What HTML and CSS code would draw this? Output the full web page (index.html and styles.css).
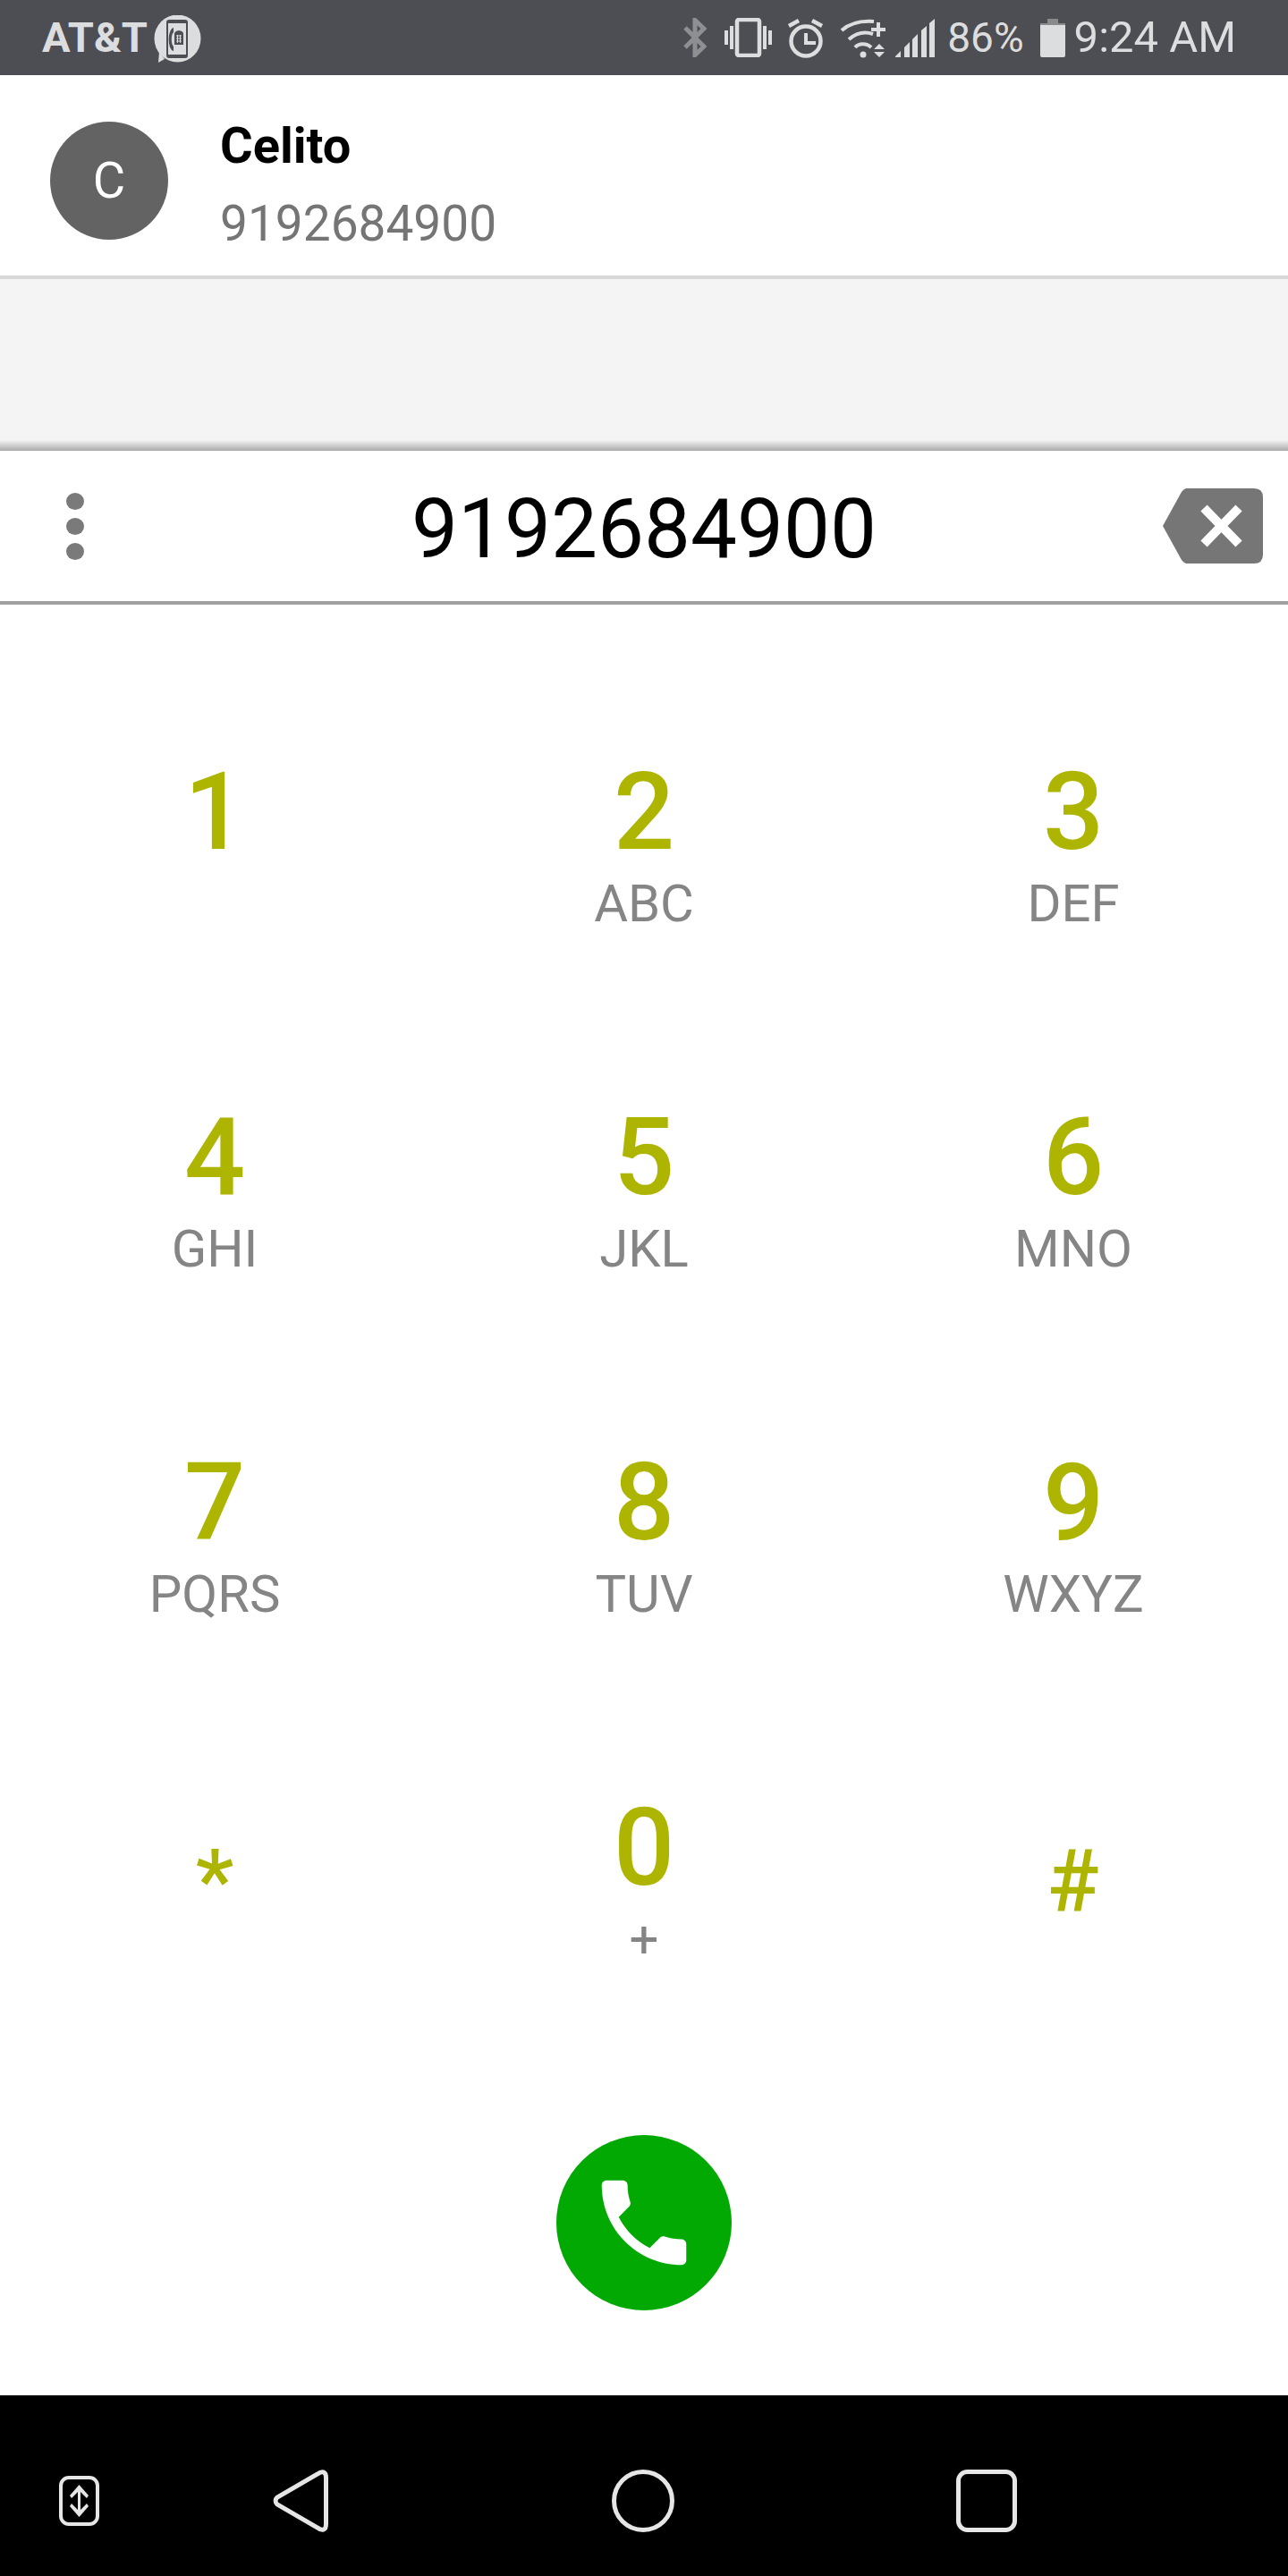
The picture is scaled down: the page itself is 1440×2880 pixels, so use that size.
FILE: index.html
```html
<!DOCTYPE html>
<html lang="en">
<head>
    <meta charset="UTF-8">
    <meta name="viewport" content="width=device-width, initial-scale=1.0">
    <title>Phone</title>
    <link rel="stylesheet" href="styles.css">
</head>
<body>
    <div class="status-bar">
        <div class="carrier">AT&amp;T</div>
        <svg class="carrier-icon" width="54" height="54" viewBox="0 0 54 54">
            <ellipse cx="26.5" cy="26" rx="26" ry="26.5" fill="#dcddde"/>
            <path d="M6 41 L12 49 L5 53 Z" fill="#dcddde"/>
            <rect x="14" y="5" width="24" height="43" rx="3" fill="#4d4e53"/>
            <rect x="16" y="9" width="20" height="35" fill="#dcddde"/>
            <path d="M22 14 C15 16 15 38 22 40 V35 C19 33 19 21 22 19 Z" fill="#4d4e53"/>
            <path d="M23 21 C23 16 33 16 33 21 V33 H23 Z" fill="#4d4e53"/>
            <path d="M25 23 H31 M25 26 H31 M25 29 H31 M26.500 22 V31 M29.500 22 V31" stroke="#dcddde" stroke-width="1"/>
        </svg>
        <div class="status-right">
            <svg width="26" height="44" viewBox="0 0 26 44" fill="none" stroke="#8e8f92" stroke-width="5">
                <path d="M2 33 L23 12 L13 2.500 V41.500 L23 32 L2 11"/>
            </svg>
            <svg class="ic-vibrate" width="53" height="44" viewBox="0 0 53 44" fill="#dcddde">
                <rect x="14" y="2" width="25" height="40" rx="2" fill="none" stroke="#dcddde" stroke-width="4.500"/>
                <rect x="0" y="14" width="4" height="16"/>
                <rect x="6" y="9" width="4" height="26"/>
                <rect x="43" y="9" width="4" height="26"/>
                <rect x="49" y="14" width="4" height="16"/>
            </svg>
            <svg class="ic-alarm" width="41" height="45" viewBox="0 0 41 45" fill="none" stroke="#dcddde" stroke-width="4.500">
                <circle cx="21" cy="26" r="16.500"/>
                <path d="M21 17 V28 H32" stroke-width="4"/>
                <path d="M2 9 L13 3 M28 3 L39 9"/>
            </svg>
            <svg class="ic-wifi" width="51" height="45" viewBox="0 0 51 45" fill="none" stroke="#dcddde" stroke-width="4">
                <path d="M2 14 C12 5 24 3 38 4"/>
                <path d="M10 24 C18 17 28 15 37 18"/>
                <path d="M17 33 C21 28 30 28 35 33"/>
                <circle cx="26" cy="41" r="3.500" fill="#dcddde" stroke="none"/>
                <path d="M35 13 H51 M43 5 V21"/>
                <path d="M38 35 L44 29 L50 35 Z M38 38 H50 L44 44 Z" fill="#dcddde" stroke="none"/>
            </svg>
            <svg class="ic-signal" width="45" height="44" viewBox="0 0 45 44" fill="#dcddde">
                <polygon points="1,44 1,43 7,37 7,44"/>
                <polygon points="11,44 11,33 17,27 17,44"/>
                <polygon points="20,44 20,24 26,18 26,44"/>
                <polygon points="30,44 30,14 36,9 36,44"/>
                <polygon points="39,44 39,6 45,1 45,44"/>
            </svg>
            <span class="pct">86%</span>
            <svg class="ic-battery" width="28" height="43" viewBox="0 0 28 43">
                <rect x="8" y="0" width="12" height="6" fill="#8a8a8c"/>
                <rect x="0" y="5" width="28" height="2" fill="#8a8a8c"/>
                <path d="M0 7 H28 V41 Q28 43 26 43 H2 Q0 43 0 41 Z" fill="#dcddde"/>
            </svg>
            <span class="clock">9:24 AM</span>
        </div>
    </div>

    <div class="contact">
        <div class="avatar">C</div>
        <div class="contact-text">
            <div class="contact-name">Celito</div>
            <div class="contact-number">9192684900</div>
        </div>
    </div>

    <div class="band"></div>

    <div class="dial-bar">
        <div class="menu-dots"><span></span><span></span><span></span></div>
        <div class="dial-number">9192684900</div>
        <svg class="backspace" width="112" height="84" viewBox="0 0 112 84">
            <path d="M27 0 H102 Q112 0 112 10 V74 Q112 84 102 84 H27 Q24 84 21 80 L0 42 L21 4 Q24 0 27 0 Z" fill="#767676"/>
            <path d="M46 22 L85 62 M85 22 L46 62" stroke="#fff" stroke-width="10"/>
        </svg>
    </div>

    <div class="keypad">
        <div class="key"><div class="digit">1</div><div class="letters"></div></div>
        <div class="key"><div class="digit">2</div><div class="letters">ABC</div></div>
        <div class="key"><div class="digit">3</div><div class="letters">DEF</div></div>
        <div class="key"><div class="digit">4</div><div class="letters">GHI</div></div>
        <div class="key"><div class="digit">5</div><div class="letters">JKL</div></div>
        <div class="key"><div class="digit">6</div><div class="letters">MNO</div></div>
        <div class="key"><div class="digit">7</div><div class="letters">PQRS</div></div>
        <div class="key"><div class="digit">8</div><div class="letters">TUV</div></div>
        <div class="key"><div class="digit">9</div><div class="letters">WXYZ</div></div>
        <div class="key"><div class="symbol">*</div></div>
        <div class="key"><div class="digit">0</div><div class="letters">+</div></div>
        <div class="key"><div class="symbol">#</div></div>
    </div>

    <div class="call-row">
        <div class="call-button">
            <svg width="126" height="126" viewBox="0 0 24 24" fill="#fff">
                <path d="M6.62 10.79c1.44 2.83 3.76 5.14 6.59 6.59l2.2-2.2c.27-.27.67-.36 1.02-.24 1.12.37 2.33.57 3.57.57.55 0 1 .45 1 1V20c0 .55-.45 1-1 1-9.39 0-17-7.61-17-17 0-.55.45-1 1-1h3.5c.55 0 1 .45 1 1 0 1.25.2 2.45.57 3.57.11.35.03.74-.25 1.02l-2.2 2.2z"/>
            </svg>
        </div>
    </div>

    <div class="nav-bar">
        <svg class="nav-swap" width="45" height="56" viewBox="0 0 45 56">
            <rect x="2" y="2" width="41" height="52" rx="9" fill="none" stroke="#e6e6e6" stroke-width="4"/>
            <path d="M22.500 10 L33 22 L31 25 L24 18 V38 L31 31 L33 34 L22.500 46 L12 34 L14 31 L21 38 V18 L14 25 L12 22 Z" fill="#e6e6e6"/>
        </svg>
        <svg class="nav-back" width="62" height="70" viewBox="0 0 62 70">
            <path d="M50 5 C55 1 59.500 2 59.500 9 V61 C59.500 68 55 69 50 65 L5 39 C2.500 37 2.500 33 5 31 Z" fill="none" stroke="#e6e6e6" stroke-width="5"/>
        </svg>
        <svg class="nav-home" width="70" height="70" viewBox="0 0 70 70">
            <circle cx="35" cy="35" r="32.500" fill="none" stroke="#e6e6e6" stroke-width="5"/>
        </svg>
        <svg class="nav-recent" width="68" height="70" viewBox="0 0 68 70">
            <rect x="2.500" y="2.500" width="63" height="65" rx="10" fill="none" stroke="#e6e6e6" stroke-width="5"/>
        </svg>
    </div>
</body>
</html>
```
FILE: styles.css
```css
body {
    margin: 0;
    width: 1440px;
    height: 2880px;
    display: flex;
    flex-direction: column;
    font-family: Roboto, "Liberation Sans", sans-serif;
    background-color: #fff;
    overflow: hidden;
}

/* status bar */
.status-bar {
    height: 84px;
    flex-shrink: 0;
    display: flex;
    align-items: center;
    padding: 0 58px 0 47px;
    box-sizing: border-box;
    background-color: #4d4e53;
    color: #dcddde;
}

.carrier {
    font-size: 47px;
    font-weight: 700;
    line-height: 84px;
}

.carrier-icon {
    margin-left: 7px;
    margin-top: 3px;
}

.status-right {
    margin-left: auto;
    display: flex;
    align-items: center;
}

.ic-vibrate {
    margin-left: 20px;
}

.ic-alarm {
    margin-left: 17px;
}

.ic-wifi {
    margin-left: 18px;
}

.ic-signal {
    margin-left: 10px;
}

.pct {
    margin-left: 14px;
    font-size: 46px;
    line-height: 50px;
}

.ic-battery {
    margin-left: 18px;
}

.clock {
    margin-left: 10px;
    font-size: 49px;
    line-height: 50px;
}

/* contact row */
.contact {
    height: 224px;
    flex-shrink: 0;
    display: flex;
    align-items: flex-start;
    padding-left: 56px;
    border-bottom: 4px solid #d8d8d8;
}

.avatar {
    width: 132px;
    height: 132px;
    margin-top: 52px;
    border-radius: 50%;
    background-color: #636363;
    color: #fff;
    font-size: 56px;
    font-weight: 400;
    line-height: 132px;
    text-align: center;
}

.contact-text {
    margin-left: 58px;
    margin-top: 36px;
}

.contact-name {
    font-size: 56px;
    font-weight: 700;
    line-height: 87px;
    color: #000;
}

.contact-number {
    font-size: 55px;
    line-height: 87px;
    color: #757575;
}

.band {
    height: 192px;
    flex-shrink: 0;
    background: linear-gradient(to bottom, #f4f4f4 180px, #aaa 192px);
}

/* number field */
.dial-bar {
    height: 168px;
    flex-shrink: 0;
    display: grid;
    grid-template-columns: 1fr auto 1fr;
    align-items: center;
    padding: 0 28px;
    border-bottom: 4px solid #a0a0a0;
}

.menu-dots {
    display: flex;
    flex-direction: column;
    gap: 9px;
    margin-left: 46px;
}

.menu-dots span {
    width: 20px;
    height: 19px;
    border-radius: 50%;
    background-color: #7a7a7a;
}

.dial-number {
    font-size: 92.5px;
    line-height: 120px;
    padding-top: 8px;
    color: #000;
}

.backspace {
    justify-self: end;
}

/* keypad */
.keypad {
    display: grid;
    grid-template-columns: repeat(3, 480px);
    grid-auto-rows: 386px;
    padding-top: 167px;
    flex-shrink: 0;
}

.key {
    text-align: center;
}

.digit {
    font-size: 120px;
    font-weight: 500;
    line-height: 130px;
    color: #adb500;
}

.symbol {
    font-size: 96px;
    font-weight: 500;
    line-height: 130px;
    padding-top: 37px;
    color: #adb500;
}

.letters {
    font-size: 58px;
    line-height: 74px;
    height: 74px;
    color: #858585;
}

/* call button */
.call-row {
    display: flex;
    justify-content: center;
    flex-shrink: 0;
    padding-bottom: 95px;
}

.call-button {
    width: 196px;
    height: 196px;
    border-radius: 50%;
    background-color: #03a903;
    display: flex;
    align-items: center;
    justify-content: center;
}

/* navigation bar */
.nav-bar {
    flex: 1;
    display: flex;
    align-items: flex-start;
    padding: 83px 0 0 66px;
    background-color: #000;
}

.nav-swap {
    margin-top: 7px;
}

.nav-back {
    margin-left: 194px;
}

.nav-home {
    margin-left: 317px;
}

.nav-recent {
    margin-left: 315px;
}
```
